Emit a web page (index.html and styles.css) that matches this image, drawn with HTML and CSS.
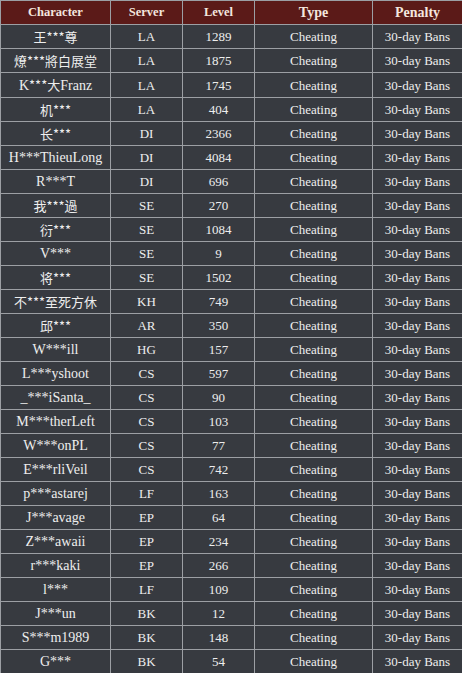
FILE: index.html
```html
<!DOCTYPE html>
<html>
<head>
<meta charset="utf-8">
<link rel="stylesheet" href="styles.css">
</head>
<body>
<table class="bans">
  <colgroup>
    <col class="c-char"><col class="c-srv"><col class="c-lvl"><col class="c-type"><col class="c-pen">
  </colgroup>
  <thead>
    <tr>
      <th class="h-sm">Character</th>
      <th class="h-sm">Server</th>
      <th class="h-sm">Level</th>
      <th class="h-lg">Type</th>
      <th class="h-lg">Penalty</th>
    </tr>
  </thead>
  <tbody>
    <tr><td class="cjk">王***尊</td><td>LA</td><td>1289</td><td>Cheating</td><td>30-day Bans</td></tr>
    <tr><td class="cjk">燎***將白展堂</td><td>LA</td><td>1875</td><td>Cheating</td><td>30-day Bans</td></tr>
    <tr><td class="name">K<span class="cjk">***大</span>Franz</td><td>LA</td><td>1745</td><td>Cheating</td><td>30-day Bans</td></tr>
    <tr><td class="cjk">机***</td><td>LA</td><td>404</td><td>Cheating</td><td>30-day Bans</td></tr>
    <tr><td class="cjk">长***</td><td>DI</td><td>2366</td><td>Cheating</td><td>30-day Bans</td></tr>
    <tr><td class="name">H***ThieuLong</td><td>DI</td><td>4084</td><td>Cheating</td><td>30-day Bans</td></tr>
    <tr><td class="name">R***T</td><td>DI</td><td>696</td><td>Cheating</td><td>30-day Bans</td></tr>
    <tr><td class="cjk">我***過</td><td>SE</td><td>270</td><td>Cheating</td><td>30-day Bans</td></tr>
    <tr><td class="cjk">衍***</td><td>SE</td><td>1084</td><td>Cheating</td><td>30-day Bans</td></tr>
    <tr><td class="name">V***</td><td>SE</td><td>9</td><td>Cheating</td><td>30-day Bans</td></tr>
    <tr><td class="cjk">将***</td><td>SE</td><td>1502</td><td>Cheating</td><td>30-day Bans</td></tr>
    <tr><td class="cjk">不***至死方休</td><td>KH</td><td>749</td><td>Cheating</td><td>30-day Bans</td></tr>
    <tr><td class="cjk">邱***</td><td>AR</td><td>350</td><td>Cheating</td><td>30-day Bans</td></tr>
    <tr><td class="name">W***ill</td><td>HG</td><td>157</td><td>Cheating</td><td>30-day Bans</td></tr>
    <tr><td class="name">L***yshoot</td><td>CS</td><td>597</td><td>Cheating</td><td>30-day Bans</td></tr>
    <tr><td class="name">_***iSanta_</td><td>CS</td><td>90</td><td>Cheating</td><td>30-day Bans</td></tr>
    <tr><td class="name">M***therLeft</td><td>CS</td><td>103</td><td>Cheating</td><td>30-day Bans</td></tr>
    <tr><td class="name">W***onPL</td><td>CS</td><td>77</td><td>Cheating</td><td>30-day Bans</td></tr>
    <tr><td class="name">E***rliVeil</td><td>CS</td><td>742</td><td>Cheating</td><td>30-day Bans</td></tr>
    <tr><td class="name">p***astarej</td><td>LF</td><td>163</td><td>Cheating</td><td>30-day Bans</td></tr>
    <tr><td class="name">J***avage</td><td>EP</td><td>64</td><td>Cheating</td><td>30-day Bans</td></tr>
    <tr><td class="name">Z***awaii</td><td>EP</td><td>234</td><td>Cheating</td><td>30-day Bans</td></tr>
    <tr><td class="name">r***kaki</td><td>EP</td><td>266</td><td>Cheating</td><td>30-day Bans</td></tr>
    <tr><td class="name">l***</td><td>LF</td><td>109</td><td>Cheating</td><td>30-day Bans</td></tr>
    <tr><td class="name">J***un</td><td>BK</td><td>12</td><td>Cheating</td><td>30-day Bans</td></tr>
    <tr><td class="name">S***m1989</td><td>BK</td><td>148</td><td>Cheating</td><td>30-day Bans</td></tr>
    <tr><td class="name">G***</td><td>BK</td><td>54</td><td>Cheating</td><td>30-day Bans</td></tr>
  </tbody>
</table>
</body>
</html>
```

FILE: styles.css
```css
html, body {
  margin: 0;
  padding: 0;
  background: #373a40;
}

.bans {
  border-collapse: collapse;
  table-layout: fixed;
  width: 462px;
  font-family: "Liberation Serif", "Noto Sans CJK SC", serif;
  font-size: 13px;
  color: #eeeeee;
}

.c-char { width: 110px; }
.c-srv { width: 72px; }
.c-lvl { width: 72px; }
.c-type { width: 118px; }
.c-pen { width: 90px; }

.bans th,
.bans td {
  border: 1px solid #9c9fa4;
  height: 23px;
  padding: 0;
  text-align: center;
  vertical-align: middle;
  line-height: 23px;
  white-space: nowrap;
  overflow: hidden;
}

.bans th {
  background: #5b1a18;
  color: #f4e6df;
  font-weight: bold;
}

.bans td {
  background: #373a40;
}

.h-sm { font-size: 12.5px; }
.h-lg { font-size: 14px; }

.bans td.name {
  font-size: 14px;
}

.cjk,
.bans td.cjk {
  font-family: "Noto Sans CJK SC", sans-serif;
  font-size: 13px;
}
```
